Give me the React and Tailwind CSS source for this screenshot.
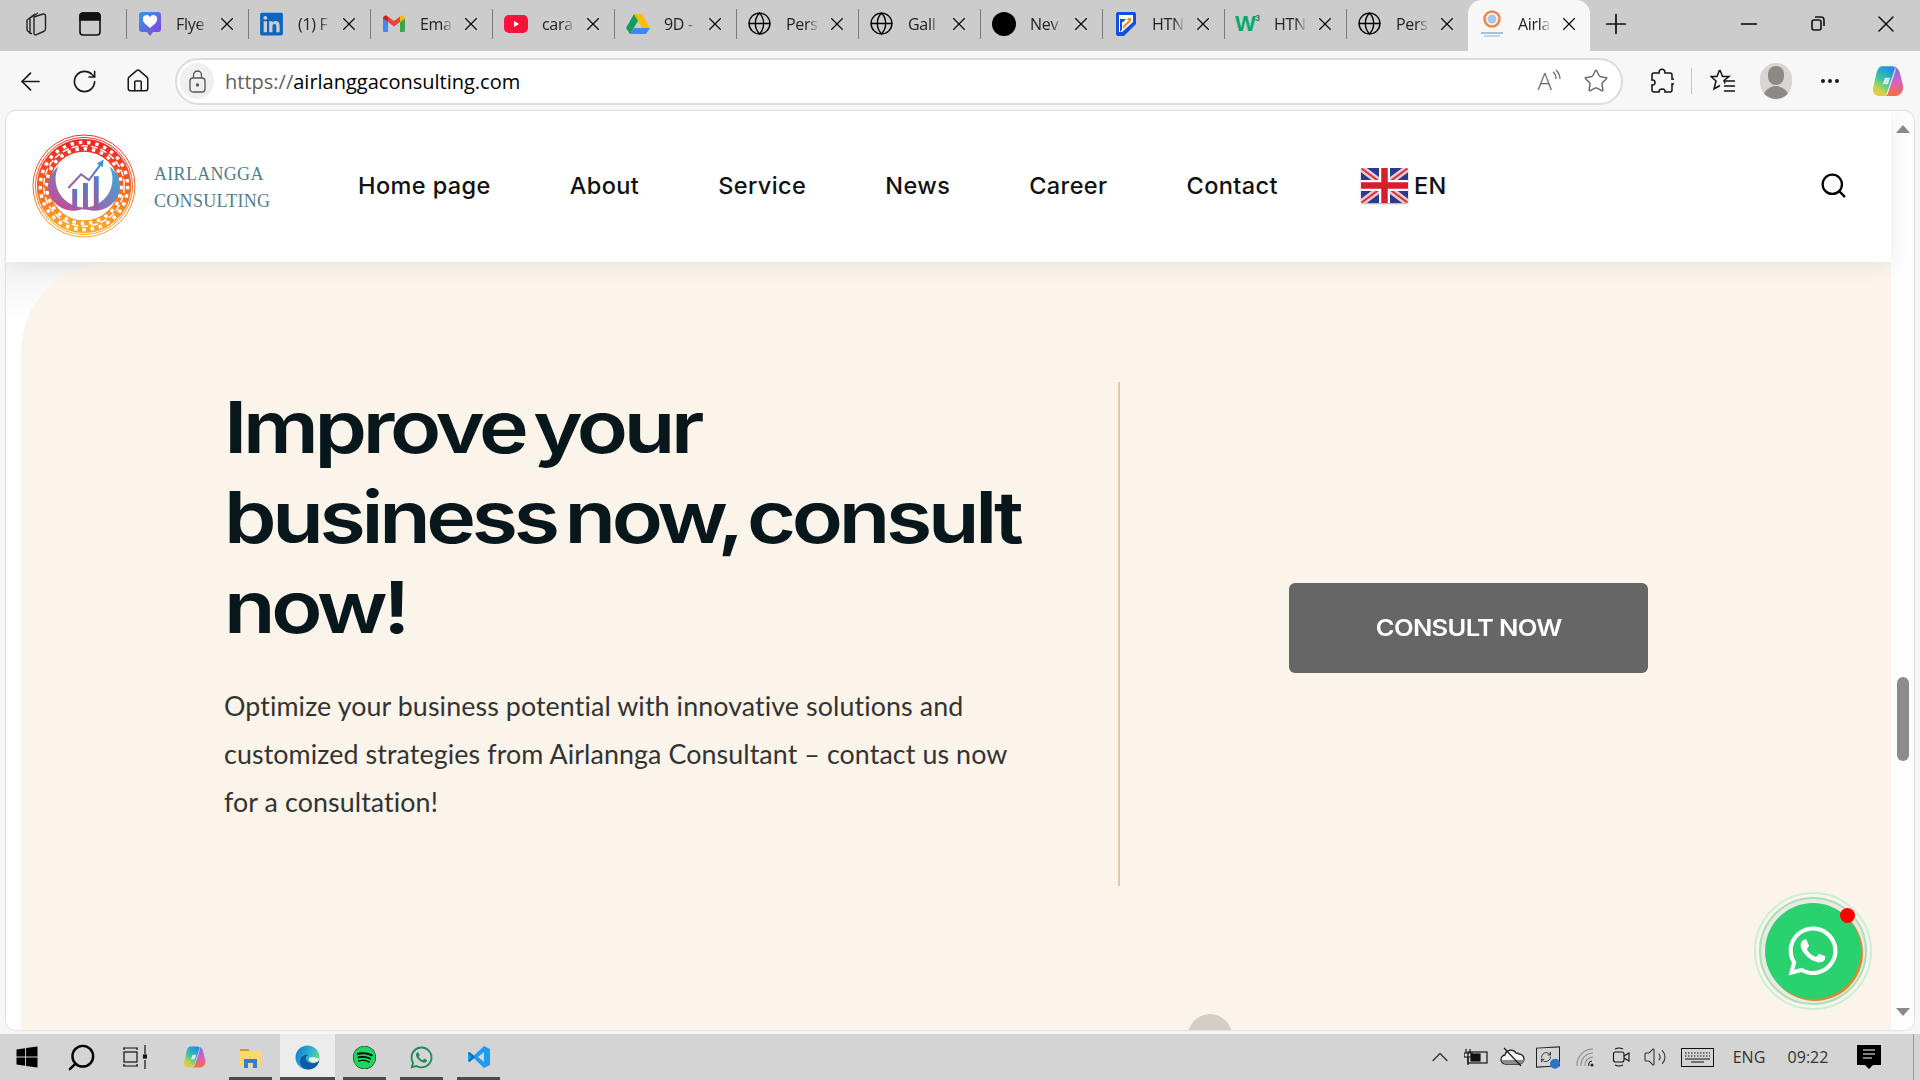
import React from "react";
import { ArrowLeft, RotateCw, Home, Star, MoreHorizontal, Globe, X, Plus, Minus, Search, ChevronUp, Volume2, RefreshCw } from "lucide-react";
import { FaWhatsapp, FaLinkedin, FaSpotify, FaWindows } from "react-icons/fa";

function FlyerIcon() {
  return (
    <svg width="24" height="26" viewBox="0 0 24 26">
      <defs>
        <linearGradient id="fly" x1="0" y1="0" x2="1" y2="1">
          <stop offset="0" stopColor="#2f9be8" />
          <stop offset="1" stopColor="#8b3de0" />
        </linearGradient>
      </defs>
      <path d="M4 1h16a3 3 0 0 1 3 3v14a3 3 0 0 1-3 3h-5l-3 4-3-4H4a3 3 0 0 1-3-3V4a3 3 0 0 1 3-3z" fill="url(#fly)" />
      <path d="M12 17c-5-4-7-6-7-8.500A3.500 3.500 0 0 1 12 7a3.500 3.500 0 0 1 7 1.500C19 11 17 13 12 17z" fill="#fff" />
    </svg>
  );
}

function GmailIcon() {
  return (
    <svg width="24" height="20" viewBox="0 0 24 20">
      <path d="M1 18V4l5 4v10H2a1 1 0 0 1-1-1z" fill="#4285f4" />
      <path d="M23 18V4l-5 4v10h4a1 1 0 0 0 1-1z" fill="#34a853" />
      <path d="M6 8V2.500L12 7l6-4.500V8l-6 4.500z" fill="#ea4335" />
      <path d="M1 4.500C1 2 3.500 1 5 2l1 .7V8z" fill="#c5221f" />
      <path d="M23 4.500C23 2 20.500 1 19 2l-1 .7V8z" fill="#fbbc04" />
    </svg>
  );
}

function YoutubeIcon() {
  return (
    <svg width="24" height="20" viewBox="0 0 24 20">
      <rect x="0" y="1" width="24" height="18" rx="5" fill="#f8123a" />
      <path d="M10 7l5 3-5 3z" fill="#fff" />
    </svg>
  );
}

function DriveIcon() {
  return (
    <svg width="24" height="22" viewBox="0 0 24 22">
      <path d="M8 1h8l8 14h-8z" fill="#fbbc04" />
      <path d="M8 1l4 7-8 13-4-6z" fill="#0f9d58" />
      <path d="M4 21l4-6h16l-4 6z" fill="#4285f4" />
    </svg>
  );
}

function HtmlDevIcon() {
  return (
    <svg width="22" height="26" viewBox="0 0 22 26">
      <path d="M3 1h16a2 2 0 0 1 2 2v10L9 25H3a2 2 0 0 1-2-2V3a2 2 0 0 1 2-2z" fill="#1450e0" />
      <path d="M4 4h14v7L7 21H4z" fill="#fff" />
      <path d="M8 18l8-8v-3h-3l-1 2h2l-6 6z" fill="#f08a24" />
      <path d="M7 19l-2 2V8h6l-3 3H7z" fill="#1450e0" />
    </svg>
  );
}

function W3Icon() {
  return (
    <span className="flex items-start font-['Liberation_Sans',sans-serif] font-bold text-[#04aa6d] leading-none">
      <span className="text-[22px] tracking-[-1px]">W</span>
      <span className="text-[9px] mt-[1px] text-[#1f8a5b]">3</span>
    </span>
  );
}

function MiniLogo() {
  return (
    <span className="flex flex-col items-center">
      <svg width="18" height="18" viewBox="0 0 18 18">
        <circle cx="9" cy="9" r="7.500" fill="none" stroke="#f0884e" strokeWidth="2.500" />
        <circle cx="9" cy="9" r="4.500" fill="#a9c8e6" />
      </svg>
      <span className="block w-[22px] h-[2px] mt-[4px] bg-[#a9c3d6]" />
      <span className="block w-[16px] h-[2px] mt-[1px] bg-[#c3d4e0]" />
    </span>
  );
}

const tabs = [
  { icon: <FlyerIcon />, title: "Flye" },
  { icon: <FaLinkedin size={26} color="#0a66c2" />, title: "(1) F" },
  { icon: <GmailIcon />, title: "Ema" },
  { icon: <YoutubeIcon />, title: "cara" },
  { icon: <DriveIcon />, title: "9D -" },
  { icon: <Globe size={25} strokeWidth={1.3} />, title: "Pers" },
  { icon: <Globe size={25} strokeWidth={1.3} />, title: "Gall" },
  { icon: <span className="block w-6 h-6 rounded-full bg-black" />, title: "Nev" },
  { icon: <HtmlDevIcon />, title: "HTN" },
  { icon: <W3Icon />, title: "HTN" },
  { icon: <Globe size={25} strokeWidth={1.3} />, title: "Pers" },
  { icon: <MiniLogo />, title: "Airla", active: true },
];

function Tab({ icon, title, active }) {
  return (
    <div className={"flex items-center w-[122px] pl-[11px] " + (active ? "bg-[#f7f7f7] rounded-t-[14px] h-[51px] pb-[4px] self-end" : "h-full pb-[4px]")}>
      <div className="w-[25px] flex justify-center shrink-0">{icon}</div>
      <div className="ml-[14px] w-[33px] shrink-0 whitespace-nowrap text-[16px] tracking-[-0.3px] text-[#222] [mask-image:linear-gradient(to_right,black_65%,transparent)]">
        {title}
      </div>
      <X size={22} strokeWidth={1.2} className="ml-[7px] shrink-0 text-black" />
    </div>
  );
}

function TabStrip() {
  return (
    <div className="h-[51px] shrink-0 bg-[#cccccc] flex items-center font-['Open_Sans',sans-serif]">
      <div className="w-[126px] flex items-center shrink-0 h-full pb-[4px]">
        <div className="w-[72px] flex justify-center">
          <svg width="26" height="28" viewBox="0 0 26 28" fill="none" stroke="#222" strokeWidth="1.4">
            <path d="M11 7l9-3a2 2 0 0 1 2.500 2v13a3 3 0 0 1-2 2.500l-7 3a1.500 1.500 0 0 1-2.500-1.500z" />
            <path d="M7 8l8-5M4 10l8-6M7 8v16M4 10v9a3 3 0 0 0 2 3l3 2" />
          </svg>
        </div>
        <div className="w-[36px] flex justify-center">
          <svg width="22" height="24" viewBox="0 0 22 24" fill="none" stroke="#111" strokeWidth="1.6">
            <rect x="1" y="1" width="20" height="22" rx="3" />
            <path d="M1 8h20V4a3 3 0 0 0-3-3H4a3 3 0 0 0-3 3z" fill="#111" />
          </svg>
        </div>
      </div>
      {tabs.map((t, i) => (
        <div key={i} className="flex items-center h-full">
          {!t.active && <div className="w-px h-[30px] mb-[4px] bg-[#7d7d7d] -mr-px" />}
          <Tab {...t} />
        </div>
      ))}
      <Plus size={32} strokeWidth={1.3} className="ml-[10px] mb-[4px] text-[#111]" />
      <div className="ml-auto flex items-center pb-[4px]">
        <div className="w-[70px] flex justify-center"><Minus size={26} strokeWidth={1.2} /></div>
        <div className="w-[68px] flex justify-center">
          <svg width="16" height="17" viewBox="0 0 16 17" fill="none" stroke="#111" strokeWidth="1.6">
            <rect x="2" y="5" width="9" height="10" rx="2" />
            <path d="M5 2h6a3 3 0 0 1 3 3v6" />
          </svg>
        </div>
        <div className="w-[68px] flex justify-center"><X size={28} strokeWidth={1.2} /></div>
      </div>
    </div>
  );
}

function CopilotIcon({ size = 32, id = "cp" }) {
  return (
    <svg width={size} height={size} viewBox="0 0 32 32">
      <defs>
        <linearGradient id={id + "a"} x1="0.7" y1="0" x2="0.2" y2="1">
          <stop offset="0" stopColor="#1f8fe8" />
          <stop offset="0.45" stopColor="#36c2a8" />
          <stop offset="0.8" stopColor="#c3d64a" />
          <stop offset="1" stopColor="#f5c542" />
        </linearGradient>
        <linearGradient id={id + "b"} x1="0.5" y1="0" x2="0.5" y2="1">
          <stop offset="0" stopColor="#7a6be8" />
          <stop offset="0.5" stopColor="#d65fc8" />
          <stop offset="1" stopColor="#f6703c" />
        </linearGradient>
      </defs>
      <path d="M11 2h10c2 0 3 2 2 4l-7 21c-.5 2-2 3-4 3H9c-5 0-7-4-6-8l3-13c.6-3 2.500-7 5-7z" fill={"url(#" + id + "a)"} />
      <path d="M21 2c4 0 6 3 7 6l3 12c1 5-2 10-7 10h-11c2 0 3.500-1 4-3l7-21c.5-2-1-4-3-4z" fill={"url(#" + id + "b)"} />
      <path d="M14 13h5l-2 6h-5z" fill="#fff" opacity="0.75" />
    </svg>
  );
}

function LockIcon() {
  return (
    <svg width="17" height="23" viewBox="0 0 17 23" fill="none" stroke="#555" strokeWidth="1.3">
      <rect x="1" y="8" width="15" height="14" rx="3" />
      <path d="M4.500 8V5a4 4 0 0 1 8 0v3" />
      <circle cx="8.500" cy="15" r="1" fill="#555" />
    </svg>
  );
}

function Toolbar() {
  return (
    <div className="h-[60px] shrink-0 bg-[#f7f7f7] flex items-center text-[#1a1a1a]">
      <div className="ml-[8px] w-[44px] flex justify-center"><ArrowLeft size={29} strokeWidth={1.4} /></div>
      <div className="ml-[10px] w-[44px] flex justify-center"><RotateCw size={27} strokeWidth={1.4} /></div>
      <div className="ml-[10px] w-[44px] flex justify-center"><Home size={26} strokeWidth={1.4} /></div>
      <div className="ml-[15px] w-[1448px] h-[47px] rounded-full bg-white border-2 border-[#dcdcdc] flex items-center pl-[3px] pr-[13px]">
        <div className="w-[34px] h-[36px] rounded-full bg-[#f0f0f0] flex items-center justify-center">
          <LockIcon />
        </div>
        <div className="ml-[11px] mt-[1px] text-[20px] font-['Open_Sans',sans-serif] text-black leading-none">
          <span className="text-[#5f5f5f]">https://</span>airlanggaconsulting.com
        </div>
        <div className="ml-auto flex items-center text-[#666]">
          <span className="text-[24px] font-['Open_Sans',sans-serif] font-light leading-none">A</span>
          <svg width="9" height="16" viewBox="0 0 9 16" fill="none" stroke="#666" strokeWidth="1.2" className="-mt-2">
            <path d="M1 3c3 2 3 5 3 7M4 1c3 3 4 6 4 9" />
          </svg>
          <Star size={26} strokeWidth={1.3} className="ml-[22px] -mr-[1px]" />
        </div>
      </div>
      <div className="ml-[17px] w-[44px] flex justify-center">
        <svg width="24" height="27" viewBox="0 0 24 27" fill="none" stroke="#111" strokeWidth="1.5">
          <path d="M9 5c0-5 6-5 6 0h5a2 2 0 0 1 2 2v4c4-1 4 6 0 5v6a2 2 0 0 1-2 2h-5c1-4-6-4-6 0H4a2 2 0 0 1-2-2v-5c4 1 4-6 0-5V7a2 2 0 0 1 2-2z" />
        </svg>
      </div>
      <div className="ml-[7px] w-px h-[26px] bg-[#c4c4c4]" />
      <div className="ml-[9px] w-[44px] flex justify-center">
        <svg width="26" height="26" viewBox="0 0 26 26" fill="none" stroke="#111" strokeWidth="1.5">
          <path d="M10 2l2.500 6.500H19l-5 4 1 3M9.500 2L7 8.500H1l5 4.500-2 8 6-3.500" />
          <path d="M15 13h10M14 18h11M14 23h11" />
        </svg>
      </div>
      <div className="ml-[9px] w-[44px] flex justify-center">
        <div className="w-[32px] h-[36px] rounded-full bg-[#d8d6d2] overflow-hidden flex flex-col items-center justify-end relative">
          <div className="w-[16px] h-[19px] rounded-full bg-[#8d8a85] mb-[1px]" />
          <div className="w-[26px] h-[13px] rounded-t-full bg-[#8d8a85]" />
        </div>
      </div>
      <div className="ml-[10px] w-[44px] flex justify-center"><MoreHorizontal size={24} strokeWidth={2} /></div>
      <div className="ml-[13px] w-[44px] flex justify-center"><CopilotIcon size={34} id="cpt" /></div>
    </div>
  );
}

function Logo() {
  return (
    <div className="flex items-center">
      <svg width="104" height="104" viewBox="0 0 106 106" className="shrink-0">
        <defs>
          <linearGradient id="ring" x1="0" y1="0" x2="0" y2="1">
            <stop offset="0" stopColor="#ee2a24" />
            <stop offset="0.5" stopColor="#f4631f" />
            <stop offset="1" stopColor="#f9a62b" />
          </linearGradient>
          <linearGradient id="cres" x1="1" y1="0" x2="0" y2="1">
            <stop offset="0" stopColor="#27b4e6" />
            <stop offset="1" stopColor="#d6408c" />
          </linearGradient>
          <linearGradient id="bars" x1="0" y1="1" x2="1" y2="0">
            <stop offset="0" stopColor="#c04b9a" />
            <stop offset="1" stopColor="#2e8fd4" />
          </linearGradient>
        </defs>
        <circle cx="53" cy="53" r="52" fill="#fff" stroke="url(#ring)" strokeWidth="1" />
        <circle cx="53" cy="53" r="49.500" fill="none" stroke="url(#ring)" strokeWidth="1" />
        <circle cx="53" cy="53" r="41.500" fill="none" stroke="url(#ring)" strokeWidth="13" />
        <circle cx="53" cy="53" r="44.500" fill="none" stroke="#fff" strokeWidth="3.500" strokeDasharray="3.500 5" />
        <circle cx="53" cy="53" r="38" fill="none" stroke="#fff" strokeWidth="3.500" strokeDasharray="3.500 5" />
        <circle cx="53" cy="53" r="41" fill="none" stroke="#fff" strokeWidth="1.500" strokeDasharray="7 3" />
        <circle cx="53" cy="53" r="34.500" fill="#fff" />
        <path d="M27 33A29 29 0 1 0 79 33 A26 25 0 0 1 53 76 A26 25 0 0 1 27 33z" fill="url(#cres)" />
        <rect x="41" y="56" width="5" height="20" fill="url(#bars)" />
        <rect x="52" y="50" width="5" height="27" fill="url(#bars)" />
        <rect x="63" y="43" width="5" height="33" fill="url(#bars)" />
        <path d="M37 55l13-14 8 6 12-16" fill="none" stroke="url(#bars)" strokeWidth="2" />
        <path d="M66 30l7-4-1 8z" fill="#2e9bd6" />
      </svg>
      <div className="ml-[18px] mt-[5px] font-['Liberation_Serif',serif] text-[18px] leading-[27px] text-[#4f7f8d] tracking-[0.3px]">
        <div>AIRLANGGA</div>
        <div>CONSULTING</div>
      </div>
    </div>
  );
}

function UkFlag() {
  return (
    <svg width="47" height="35" viewBox="0 0 47 35" className="shadow-[0_1px_2px_rgba(0,0,0,0.35)] rounded-[2px]">
      <rect width="47" height="35" fill="#2b3a8f" />
      <path d="M0 0L47 35M47 0L0 35" stroke="#f1c9cc" strokeWidth="7" />
      <path d="M0 0L47 35M47 0L0 35" stroke="#d8323c" strokeWidth="2" />
      <path d="M23.500 0v35M0 17.500h47" stroke="#fff" strokeWidth="11" />
      <path d="M23.500 0v35M0 17.500h47" stroke="#d61f2c" strokeWidth="6.500" />
    </svg>
  );
}

const navItems = ["Home page", "About", "Service", "News", "Career", "Contact"];

function Header() {
  return (
    <header className="h-[151px] shrink-0 bg-white flex items-center pl-[26px] pb-[2px] shadow-[0_4px_20px_rgba(0,0,0,0.07)] relative z-10">
      <div className="w-[326px] shrink-0">
        <Logo />
      </div>
      <nav className="flex items-center gap-[79px] text-[23.500px] leading-none text-[#111] font-['Inter',sans-serif] font-medium tracking-[0.4px]">
        {navItems.map((n) => (
          <a key={n}>{n}</a>
        ))}
        <div className="ml-[4px] flex items-center gap-[6px]">
          <UkFlag />
          <span>EN</span>
        </div>
      </nav>
      <Search size={29} strokeWidth={1.9} className="ml-auto mr-[43px] text-black" />
    </header>
  );
}

function Hero() {
  return (
    <div className="flex-1 min-h-0 pl-[15px] relative bg-[linear-gradient(to_bottom,#f3f3f3,#ffffff_60px)]">
      <div className="h-full bg-[#fbf4ea] rounded-tl-[90px] flex pl-[203px] pt-[120px] relative overflow-hidden">
        <div className="w-[896px] h-[504px] shrink-0 border-r-2 border-[#e3c99b]">
          <h1 className="font-['Inter',sans-serif] font-semibold text-[72px] leading-[90px] tracking-[-3.7px] [word-spacing:-7px] text-[#07171c] whitespace-nowrap origin-left scale-x-[1.17]">
            Improve your
            <br />
            business now, consult
            <br />
            now!
          </h1>
          <p className="mt-[30px] font-['Lato',sans-serif] text-[26.800px] leading-[48px] tracking-[0.1px] text-[#333] w-[800px]">
            Optimize your business potential with innovative solutions and customized strategies from Airlannga Consultant – contact us now for a consultation!
          </p>
        </div>
        <div className="ml-[169px] mt-[201px]">
          <button className="w-[359px] h-[90px] rounded-[6px] bg-[#666666] text-white font-['Inter',sans-serif] font-semibold text-[23px] tracking-[-0.6px]">
            <span className="inline-block scale-x-[1.11]">CONSULT NOW</span>
          </button>
        </div>
        {/* next slide's round button, clipped by the window */}
        <div className="absolute left-[1167px] -bottom-[28px] w-[44px] h-[44px] rounded-full bg-[#d3cfc8]" />
      </div>
      <WhatsappButton />
    </div>
  );
}

function WhatsappButton() {
  return (
    <div className="absolute right-[19px] bottom-[20px] w-[118px] h-[118px] rounded-full border-2 border-[#cdeed6] flex items-center justify-center">
      <div className="w-[108px] h-[108px] rounded-full border-2 border-[#a8e0b9] bg-[#ece8e2] flex items-center justify-center">
        <div className="relative w-[96px] h-[96px] rounded-full bg-[#2ad26f] shadow-[2px_2px_0_#d98a2b] flex items-center justify-center">
          <FaWhatsapp size={56} color="#fff" />
          <span className="absolute top-[5px] right-[6px] w-[15px] h-[15px] rounded-full bg-[#ff0000]" />
        </div>
      </div>
    </div>
  );
}

function Scrollbar() {
  return (
    <div className="w-[23px] shrink-0 bg-[#fdfdfd] flex flex-col items-center justify-between py-[14px] relative">
      <div className="w-0 h-0 border-x-[7px] border-x-transparent border-b-[8px] border-b-[#8a8a8a]" />
      <div className="absolute top-[566px] w-[12px] h-[84px] rounded-full bg-[#8c8c8c]" />
      <div className="w-0 h-0 border-x-[7px] border-x-transparent border-t-[8px] border-t-[#8a8a8a]" />
    </div>
  );
}

function TaskSlot({ children, width = "w-[57px]", mark, active }) {
  return (
    <div className={width + " h-full relative flex items-center justify-center " + (active ? "bg-[#ececec] mx-[1px]" : "")}>
      {children}
      {mark && <span className={"absolute bottom-0 h-[3px] bg-[#4a4a4a] " + (active ? "w-full" : "w-[43px]")} />}
    </div>
  );
}

function Taskbar() {
  return (
    <div className="h-[46px] shrink-0 bg-[#d4d4d4] flex items-center text-black">
      <TaskSlot width="w-[54px]"><FaWindows size={24} /></TaskSlot>
      <TaskSlot width="w-[54px]">
        <Search size={31} strokeWidth={1.9} className="-scale-x-100" />
      </TaskSlot>
      <TaskSlot width="w-[54px]">
        <svg width="24" height="24" viewBox="0 0 24 24" fill="none" stroke="#111" strokeWidth="1.2">
          <path d="M0 3h15M0 21h15M1 3v2M14 3v2M1 19v2M14 19v2" />
          <rect x="1" y="7" width="13" height="10" />
          <path d="M22 0v9M22 15v9" />
          <rect x="20.500" y="10" width="3" height="3" fill="#111" />
        </svg>
      </TaskSlot>
      <div className="w-[3px]" />
      <TaskSlot><CopilotIcon size={24} id="cpb" /></TaskSlot>
      <TaskSlot mark>
        <svg width="23" height="23" viewBox="0 0 23 23">
          <path d="M1 3h8l2 2h-10z" fill="#d99a16" />
          <rect x="1" y="5" width="21" height="15" fill="#fbd870" />
          <path d="M5 13h13v9h-4v-5h-5v5H5z" fill="#2f7fd6" />
        </svg>
      </TaskSlot>
      <TaskSlot width="w-[55px]" mark active>
        <svg width="25" height="25" viewBox="0 0 25 25">
          <defs>
            <linearGradient id="edg" x1="0" y1="0" x2="1" y2="0.5">
              <stop offset="0" stopColor="#1173c7" />
              <stop offset="0.6" stopColor="#2cb1d8" />
              <stop offset="1" stopColor="#5fe07d" />
            </linearGradient>
          </defs>
          <circle cx="12.500" cy="12.500" r="12" fill="url(#edg)" />
          <path d="M24.500 15c-1 5-5 9.500-11 9.500C8 24.500 4 20 5 15c1-4 5-6 8.500-5-3 1-3.500 4-1.500 6 3 3 9 3 12.500-1z" fill="#0e5aa8" />
          <path d="M14 13c3-2 8-1 10.500 2-1.500 2-6 3.500-8.500 2-2-1-3-3-2-4z" fill="#ececec" />
        </svg>
      </TaskSlot>
      <TaskSlot mark><FaSpotify size={23} color="#1ed760" className="bg-black rounded-full" /></TaskSlot>
      <TaskSlot mark><FaWhatsapp size={25} color="#1f8a5b" /></TaskSlot>
      <TaskSlot mark>
        <svg width="24" height="24" viewBox="0 0 24 24">
          <path d="M17 1l6 3v16l-6 3L7 13.500 2.500 17 1 16v-8l1.500-1L7 10.500z" fill="#1f9cf0" />
          <path d="M17 7l-6 5 6 5z" fill="#d4d4d4" />
          <path d="M1 8l1.500-1 5.500 5-5.500 5L1 16l3.500-4z" fill="#0e6fb8" />
        </svg>
      </TaskSlot>

      <div className="ml-auto w-[498px] h-full flex items-center font-['Open_Sans',sans-serif] text-[#333] relative">
        <TaskSlot width="w-[36px]"><ChevronUp size={28} strokeWidth={1.2} /></TaskSlot>
        <TaskSlot width="w-[36px]">
          <svg width="24" height="18" viewBox="0 0 24 18" fill="none" stroke="#111" strokeWidth="1.2">
            <rect x="4" y="4" width="19" height="11" />
            <rect x="7" y="6" width="9" height="7" fill="#111" />
            <path d="M2 1v4M6 1v4M0 5h8v4H0zM4 9v8" />
          </svg>
        </TaskSlot>
        <TaskSlot width="w-[36px]">
          <svg width="25" height="20" viewBox="0 0 25 20" stroke="#222" strokeWidth="1.3">
            <path d="M6 17a4.500 4.500 0 0 1-1-9 6 6 0 0 1 11-2 5 5 0 0 1 3 1 5 5 0 0 1 5 5 5 5 0 0 1-5 5z" fill="#f3f3f3" />
            <path d="M2 13h22a5 5 0 0 1-5 4H6a4.500 4.500 0 0 1-4-4z" fill="#8a8a8a" stroke="none" />
            <path d="M4 1l17 18" fill="none" />
          </svg>
        </TaskSlot>
        <TaskSlot width="w-[36px]">
          <span className="relative block border border-[#222] w-[24px] h-[20px] -skew-y-3">
            <RefreshCw size={12} strokeWidth={1.5} className="absolute left-[3px] top-[3px] text-[#111]" />
            <span className="absolute -right-[1px] -bottom-[3px] w-[10px] h-[10px] rounded-full bg-[#2f72c4]" />
          </span>
        </TaskSlot>
        <TaskSlot width="w-[40px]">
          <svg width="20" height="20" viewBox="0 0 20 20" fill="none" stroke="#8a8a8a" strokeWidth="1.100">
            <path d="M1 19A16 16 0 0 1 17 2M5 19A12 12 0 0 1 17 6M9 19A8 8 0 0 1 17 10" />
            <circle cx="16" cy="18" r="1.500" fill="#222" stroke="none" />
            <path d="M13 19a3.500 3.500 0 0 1 3-5" stroke="#222" />
          </svg>
        </TaskSlot>
        <TaskSlot width="w-[30px]">
          <svg width="18" height="22" viewBox="0 0 18 22" fill="none" stroke="#111" strokeWidth="1.1">
            <rect x="1.500" y="6" width="10.500" height="10" rx="2" />
            <path d="M12 10l5-3v8l-5-3" />
            <path d="M3 3a9 9 0 0 1 8 0M3 19a9 9 0 0 0 8 0" />
          </svg>
        </TaskSlot>
        <TaskSlot width="w-[38px]"><Volume2 size={24} strokeWidth={1.1} /></TaskSlot>
        <TaskSlot width="w-[46px]">
          <svg width="33" height="19" viewBox="0 0 33 19" fill="none" stroke="#111" strokeWidth="1">
            <rect x="0.500" y="0.500" width="32" height="18" />
            <path d="M4 5h25M4 8h25" strokeDasharray="1.500 1.500" />
            <path d="M4 11h25M10 14h13" />
          </svg>
        </TaskSlot>
        <div className="w-[58px] text-center text-[16px] leading-none">ENG</div>
        <div className="w-[60px] text-center text-[16px] leading-none">09:22</div>
        <TaskSlot width="w-[62px]">
          <svg width="24" height="24" viewBox="0 0 24 24">
            <path d="M0 0h24v20h-8l-4 4-4-4H0z" fill="#000" />
            <path d="M6 5h12M6 9h12M6 13h9" stroke="#fff" strokeWidth="1.2" />
          </svg>
        </TaskSlot>
        <div className="absolute right-[6px] top-0 h-full w-px bg-[#9b9b9b]" />
      </div>
    </div>
  );
}

export default function App() {
  return (
    <div className="w-[1920px] h-[1080px] overflow-hidden flex flex-col bg-[#f7f7f7]">
      <TabStrip />
      <Toolbar />
      <div className="flex-1 min-h-0 ml-[6px] mr-[6px] mb-[4px] flex rounded-[10px] overflow-hidden bg-white shadow-[0_0_2px_rgba(0,0,0,0.3)]">
        <div className="flex-1 min-w-0 flex flex-col">
          <Header />
          <Hero />
        </div>
        <Scrollbar />
      </div>
      <Taskbar />
    </div>
  );
}
